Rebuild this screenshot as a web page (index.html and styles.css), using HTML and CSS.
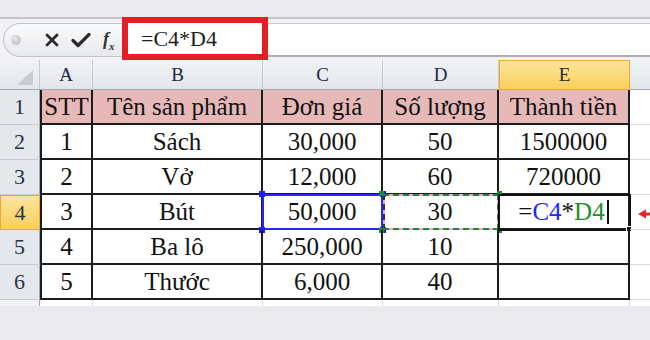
FILE: index.html
```html
<!DOCTYPE html>
<html lang="vi">
<head>
    <meta charset="UTF-8">
    <meta name="viewport" content="width=device-width, initial-scale=1.0">
    <title>Excel - nhân hai ô</title>
    <link rel="stylesheet" href="styles.css">
</head>
<body>
    <div class="ribbon-gap"></div>
    <div class="formula-bar">
        <div class="fx-tools">
            <span class="knob"></span>
            <svg class="tool-icon" width="14" height="14" viewBox="0 0 14 14">
                <path d="M2 2 L12 12 M12 2 L2 12" stroke="#2b2b2b" stroke-width="2.8" stroke-linecap="round"/>
            </svg>
            <svg class="tool-icon" width="20" height="16" viewBox="0 0 20 16">
                <path d="M2 8.5 L7 13.5 L18 2.5" fill="none" stroke="#2b2b2b" stroke-width="3.2" stroke-linecap="round" stroke-linejoin="round"/>
            </svg>
            <span class="fx"><i>f</i><sub>x</sub></span>
        </div>
        <div class="formula-box">=C4*D4</div>
        <div class="formula-rest"></div>
    </div>

    <div class="sheet">
        <div class="colhead corner"></div>
        <div class="colhead">A</div>
        <div class="colhead">B</div>
        <div class="colhead">C</div>
        <div class="colhead">D</div>
        <div class="colhead active">E</div>
        <div class="colhead"></div>

        <div class="rowhead">1</div>
        <div class="cell t first head">STT</div>
        <div class="cell t head">Tên sản phẩm</div>
        <div class="cell t head">Đơn giá</div>
        <div class="cell t head">Số lượng</div>
        <div class="cell t head">Thành tiền</div>
        <div class="cell"></div>

        <div class="rowhead">2</div>
        <div class="cell t first">1</div>
        <div class="cell t">Sách</div>
        <div class="cell t">30,000</div>
        <div class="cell t">50</div>
        <div class="cell t">1500000</div>
        <div class="cell"></div>

        <div class="rowhead">3</div>
        <div class="cell t first">2</div>
        <div class="cell t">Vở</div>
        <div class="cell t">12,000</div>
        <div class="cell t">60</div>
        <div class="cell t">720000</div>
        <div class="cell"></div>

        <div class="rowhead active">4</div>
        <div class="cell t first">3</div>
        <div class="cell t">Bút</div>
        <div class="cell t ref-c">
            50,000
            <span class="blue-box"></span>
            <span class="dot tl"></span><span class="dot tr"></span>
            <span class="dot bl"></span><span class="dot br"></span>
        </div>
        <div class="cell t ref-d">
            30
            <span class="ants"></span>
            <span class="gdot tl"></span><span class="gdot tr"></span>
            <span class="gdot bl"></span><span class="gdot br"></span>
        </div>
        <div class="cell t editing">
            <span class="edit-text">=<span class="ref-blue">C4</span>*<span class="ref-green">D4</span><span class="caret"></span></span>
            <span class="fill-handle"></span>
        </div>
        <div class="cell arrow-cell">
            <svg class="arrow" width="14" height="12" viewBox="0 0 14 12">
                <path d="M0 6 L8 1.5 L8 4.5 L14 4.5 L14 7.5 L8 7.5 L8 10.5 Z" fill="#e8262a"/>
            </svg>
        </div>

        <div class="rowhead">5</div>
        <div class="cell t first">4</div>
        <div class="cell t">Ba lô</div>
        <div class="cell t">250,000</div>
        <div class="cell t">10</div>
        <div class="cell t"></div>
        <div class="cell"></div>

        <div class="rowhead">6</div>
        <div class="cell t first">5</div>
        <div class="cell t">Thước</div>
        <div class="cell t">6,000</div>
        <div class="cell t">40</div>
        <div class="cell t"></div>
        <div class="cell"></div>

        <div class="rowhead stub"></div>
        <div class="cell stub"></div>
        <div class="cell stub"></div>
        <div class="cell stub"></div>
        <div class="cell stub"></div>
        <div class="cell stub"></div>
        <div class="cell stub"></div>
    </div>
    <div class="page-bottom"></div>
</body>
</html>
```

FILE: styles.css
```css
body {
    margin: 0;
    width: 650px;
    height: 340px;
    overflow: hidden;
    background-color: #e9e9ee;
    font-family: "Liberation Serif", serif;
    color: #111;
    display: flex;
    flex-direction: column;
}
.ribbon-gap {
    height: 17px;
    background-color: #ebebef;
}
.formula-bar {
    height: 43px;
    display: flex;
    background-color: #f2f2f5;
    border-top: 2px solid #c4c4ca;
    box-sizing: border-box;
}
.fx-tools {
    width: 118px;
    margin: 4px 0 3px 3px;
    display: flex;
    align-items: center;
    border: 1px solid #bfc3ca;
    border-right: none;
    border-radius: 17px 0 0 17px;
    background: linear-gradient(#fafbfc, #e6e8ec);
}
.knob {
    width: 10px;
    height: 10px;
    margin: 0 24px 0 7px;
    border-radius: 50%;
    background: radial-gradient(circle at 40% 35%, #e8e8e8, #b4b4b4);
}
.tool-icon {
    margin-right: 12px;
}
.fx {
    font-size: 18px;
    font-weight: bold;
    color: #333;
}
.fx sub {
    font-size: 11px;
    font-style: italic;
}
.formula-box {
    width: 146px;
    margin-top: -2px;
    border: 6px solid #e31e24;
    box-sizing: border-box;
    background-color: #fff;
    display: flex;
    align-items: center;
    padding-left: 13px;
    font-size: 22px;
    color: #1b1b1b;
}
.formula-rest {
    flex: 1;
    margin: 4px 0 3px;
    background-color: #fff;
    border-top: 1px solid #c8c8c8;
    border-bottom: 2px solid #aeb0b5;
}
.sheet {
    display: grid;
    grid-template-columns: 40px 53px 170px 120px 116px 131px 1fr;
    grid-template-rows: 30px repeat(6, 35px) 6px;
    background-color: #fff;
}
.colhead {
    background: linear-gradient(#f1f3f6, #e2e5ea);
    border-right: 1px solid #c6cad0;
    border-bottom: 1px solid #a3aab5;
    display: flex;
    align-items: center;
    justify-content: center;
    font-size: 19px;
    color: #1e2a44;
}
.colhead.active {
    background: linear-gradient(#fde59b, #f9cf5c);
    border: 1px solid #eaa73a;
}
.corner {
    position: relative;
}
.corner::after {
    content: "";
    position: absolute;
    right: 6px;
    bottom: 4px;
    width: 16px;
    height: 15px;
    background-color: #c9ccd1;
    clip-path: polygon(100% 0, 100% 100%, 0 100%);
}
.rowhead {
    background-color: #e4e7eb;
    border-right: 1px solid #a3aab5;
    border-bottom: 1px solid #c6cad0;
    display: flex;
    align-items: center;
    justify-content: center;
    font-size: 22px;
    color: #2a3344;
}
.rowhead.active {
    background: linear-gradient(#fde59b, #f9cf5c);
    border: 1px solid #eaa73a;
}
.rowhead.stub {
    background-color: #f1f2f4;
    border-bottom: none;
}
.cell {
    position: relative;
    border-right: 1px solid #d8d8d8;
    border-bottom: 1px solid #d8d8d8;
    display: flex;
    align-items: center;
    justify-content: center;
    font-size: 25px;
    white-space: nowrap;
}
.cell.stub {
    border-bottom: none;
}
.cell.t {
    border-right: 2px solid #1c1c1c;
    border-bottom: 2px solid #1c1c1c;
}
.cell.first {
    border-left: 2px solid #1c1c1c;
}
.cell.head {
    background-color: #e6b9b8;
}
.blue-box {
    position: absolute;
    inset: -1px -2px -2px -1px;
    border: 2px solid #2626ff;
}
.dot, .gdot {
    position: absolute;
    width: 6px;
    height: 6px;
    background-color: #1c1cff;
}
.gdot {
    width: 5px;
    height: 5px;
    background-color: #1e8a2c;
}
.tl { top: -4px; left: -4px; }
.tr { top: -4px; right: -5px; }
.bl { bottom: -5px; left: -4px; }
.br { bottom: -5px; right: -5px; }
.ants {
    position: absolute;
    inset: -1px -2px -2px 0;
    border: 2px solid #ee9de8;
}
.ants::after {
    content: "";
    position: absolute;
    inset: -2px;
    border: 2px dashed #1f8a2a;
    border-left-color: #3a3a10;
}
.editing {
    outline: 2px solid #111;
    outline-offset: -1px;
}
.edit-text {
    display: flex;
    align-items: center;
    font-size: 25px;
}
.ref-blue {
    color: #2323ff;
}
.ref-green {
    color: #1f8f2b;
}
.caret {
    width: 2px;
    height: 24px;
    margin-left: 2px;
    background-color: #111;
}
.fill-handle {
    position: absolute;
    right: -4px;
    bottom: -4px;
    width: 4px;
    height: 4px;
    border: 1px solid #fff;
    background-color: #111;
}
.arrow-cell {
    justify-content: flex-start;
}
.arrow {
    margin-left: 8px;
    margin-top: 3px;
}
.page-bottom {
    flex: 1;
    background-color: #e9e9ee;
}
```
